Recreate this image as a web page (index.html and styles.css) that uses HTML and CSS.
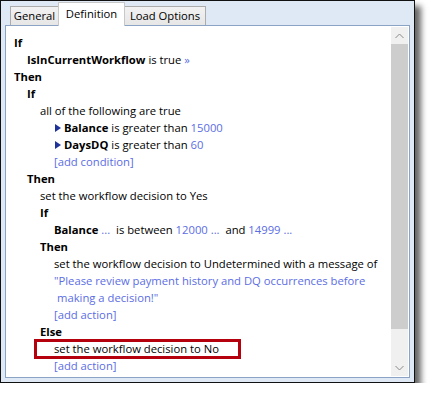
FILE: index.html
```html
<!DOCTYPE html>
<html>
<head>
<meta charset="utf-8">
<link rel="stylesheet" href="styles.css">
</head>
<body>
<div class="window">
  <div class="tabs">
    <div class="tab t-general">General</div>
    <div class="tab t-def active">Definition</div>
    <div class="tab t-load">Load Options</div>
  </div>
  <div class="panel">
    <div class="content">
      <div class="l i0"><b>If</b></div>
      <div class="l i1"><b>IsInCurrentWorkflow</b> is true <span class="lk">»</span></div>
      <div class="l i0"><b>Then</b></div>
      <div class="l i1"><b>If</b></div>
      <div class="l i2">all of the following are true</div>
      <div class="l i3"><span class="tri"></span><b>Balance</b> is greater than <span class="lk">15000</span></div>
      <div class="l i3"><span class="tri"></span><b>DaysDQ</b> is greater than <span class="lk">60</span></div>
      <div class="l i3"><span class="lk">[add condition]</span></div>
      <div class="l i1"><b>Then</b></div>
      <div class="l i2">set the workflow decision to Yes</div>
      <div class="l i2"><b>If</b></div>
      <div class="l i3"><b>Balance</b> <span class="lk">...</span>&nbsp; is between <span class="lk">12000 ...</span>&nbsp; and <span class="lk">14999 ...</span></div>
      <div class="l i2"><b>Then</b></div>
      <div class="l i3">set the workflow decision to Undetermined with a message of</div>
      <div class="l i3"><span class="lk">"Please review payment history and DQ occurrences before</span></div>
      <div class="l i3 cont"><span class="lk">making a decision!"</span></div>
      <div class="l i3"><span class="lk">[add action]</span></div>
      <div class="l i2"><b>Else</b></div>
      <div class="l i3"><span class="hl">set the workflow decision to No</span></div>
      <div class="l i3"><span class="lk">[add action]</span></div>
    </div>
    <div class="scrollbar">
      <div class="arrow"><svg width="9" height="6" viewBox="0 0 9 6"><polyline points="0.5,5 4.5,1 8.5,5" fill="none" stroke="#8a8a8a" stroke-width="1"/></svg></div>
      <div class="thumb"></div>
      <div class="track"></div>
      <div class="arrow"><svg width="9" height="6" viewBox="0 0 9 6"><polyline points="0.5,1 4.5,5 8.5,1" fill="none" stroke="#8a8a8a" stroke-width="1"/></svg></div>
    </div>
  </div>
</div>
</body>
</html>
```

FILE: styles.css
```css
html, body {
  margin: 0;
  padding: 0;
  background: #ffffff;
}

body {
  font-family: "Open Sans", "Noto Sans", sans-serif;
  font-size: 11.25px;
  color: #000;
}

.window {
  box-sizing: border-box;
  width: 415px;
  height: 383px;
  border: 1px solid #111;
  background: #dfe8f5;
  padding: 0 4px 4px 4px;
  box-shadow: 6px 6px 6px rgba(0, 0, 0, 0.6);
  display: flex;
  flex-direction: column;
}

.tabs {
  display: flex;
  align-items: flex-end;
  height: 24px;
  padding-left: 5px;
}

.tab {
  box-sizing: border-box;
  height: 19px;
  border: 1px solid #acacac;
  border-bottom: none;
  background: linear-gradient(#f2f2f2, #e6e6e6);
  text-align: center;
  line-height: 18px;
  font-size: 11.25px;
  color: #000;
}

.t-general { width: 48px; border-right: none; }
.t-def { width: 67px; }
.t-load { width: 81px; border-left: none; }

.tab.active {
  height: 24px;
  background: #fff;
  margin-bottom: -1px;
  position: relative;
  z-index: 1;
  line-height: 22px;
  border-color: #c8c8c8;
}

.panel {
  flex: 1;
  display: flex;
  background: #fff;
  border: 1px solid #8ba4c6;
}

.content {
  flex: 1;
  padding: 8px 0 0 8px;
}

.l {
  height: 17px;
  line-height: 17px;
  white-space: nowrap;
}

.i0 { padding-left: 0; }
.i1 { padding-left: 13px; }
.i2 { padding-left: 26px; }
.i3 { padding-left: 40px; }
.cont { padding-left: 43px; }

b { font-weight: 700; }

.lk { color: #5b6de4; }

.tri {
  display: inline-block;
  width: 0;
  height: 0;
  border-left: 6px solid #1f3299;
  border-top: 4px solid transparent;
  border-bottom: 4px solid transparent;
  margin: 0 3px 0 1px;
}

.hl {
  position: relative;
}

.hl::after {
  content: "";
  position: absolute;
  left: -20px;
  top: -2px;
  width: 201px;
  height: 14px;
  border: 3px solid #b5000d;
}

.scrollbar {
  width: 17px;
  margin: 1px 1px 1px 0;
  display: flex;
  flex-direction: column;
  background: #f0f0f0;
}

.arrow {
  height: 17px;
  display: flex;
  align-items: center;
  justify-content: center;
}

.thumb {
  height: 285px;
  background: #cdcdcd;
}

.track {
  flex: 1;
}
```
